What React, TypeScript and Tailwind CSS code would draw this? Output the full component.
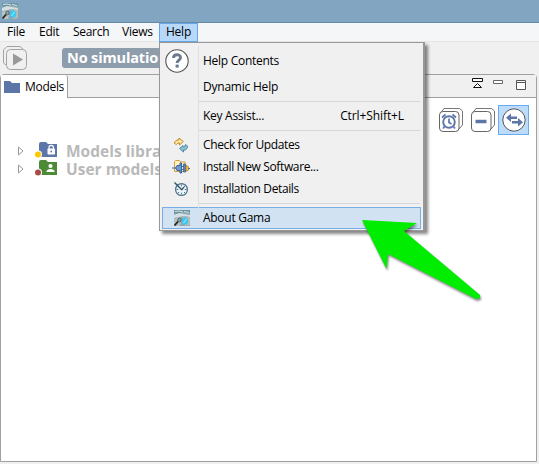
import type { ReactNode } from "react";

function GamaIcon() {
  return (
    <svg width="16" height="16" viewBox="0 0 16 16" className="shrink-0">
      <rect width="16" height="16" fill="#8fa6ae" />
      <path d="M0 0h16v3L9 2 4 4 0 3z" fill="#6d95a2" />
      <path d="M0 5l5-2 5 1 6 1v2L10 6 5 7 0 8z" fill="#d3dfe3" />
      <path d="M1 1.500l4-.5 4 1M10 1.500l5 1" stroke="#d5e3e6" fill="none" />
      <path d="M9 6l7 1v8l-5 1z" fill="#b5bcb4" />
      <path d="M0 9l4-2 4 2-2 7H0z" fill="#b4c1c5" />
      <ellipse cx="11" cy="11" rx="3" ry="3.800" fill="#38c8f4" />
      <path d="M9.500 13l3-4" stroke="#a5ecff" />
      <circle cx="5.500" cy="10" r="1.800" fill="#8fa3aa" stroke="#53656c" />
      <path d="M4 11.500l-3.500 4" stroke="#222" strokeWidth="1.800" />
    </svg>
  );
}

function HelpIcon() {
  return (
    <svg width="24" height="24" viewBox="0 0 24 24">
      <circle cx="12" cy="12" r="11.2" fill="#fff" stroke="#555" strokeWidth="1.1" />
      <path d="M8.500 9c0-4.300 7-4.200 7-.6 0 2.700-3.400 2.600-3.400 5.700" fill="none" stroke="#6b7b8d" strokeWidth="2.900" />
      <rect x="10.600" y="15.600" width="3.100" height="3" fill="#6b7b8d" />
    </svg>
  );
}

function UpdateIcon() {
  return (
    <svg width="16" height="16" viewBox="0 0 16 16">
      <path d="M3.500 7.500L1.500 6.500V5L4 3h2V1l4.300 3.500L6.500 8V6H5z" fill="#ffe7a0" stroke="#c28a2c" />
      <path d="M12.500 7.500l2 1.500v1.500L12.500 13h-2v2L6.500 11.500 10 8.500V10h1.500z" fill="#8fc1d4" stroke="#4b8aa6" />
    </svg>
  );
}

function InstallIcon() {
  return (
    <svg width="18" height="16" viewBox="0 0 18 16">
      <path d="M2.500 12.500v-10l1-1h4l1 1.500h4.500v9.500z" fill="#ffefbd" stroke="#cfa04a" />
      <path d="M5 6.500h3V4h1.500v10H8v-2.500H5L3.500 9z" fill="#6c99cf" stroke="#35629f" />
      <path d="M11.500 5v8h2V5z" fill="#5a86bd" stroke="#35629f" strokeWidth=".8" />
      <path d="M14 6.500h1l1.500 1.500v3L15 12h-1z" fill="#f5c553" stroke="#a87425" strokeWidth=".8" />
      <path d="M0 9h3.500M9.500 7.500h2M9.500 10.500h2M16.500 9.500H18" stroke="#38699f" strokeWidth="1.200" />
    </svg>
  );
}

function DetailsIcon() {
  return (
    <svg width="16" height="16" viewBox="0 0 16 16">
      <circle cx="8.500" cy="8.500" r="5.900" fill="#edf4f7" stroke="#4f758a" strokeWidth="1.300" />
      <path d="M8.500 3.500v1.800M13.500 8.500h-1.800M8.500 13.500v-1.800M3.500 8.500h1.800M12 5l-1 1M12 12l-1-1M5 12l1-1" stroke="#547b90" />
      <path d="M1.500 1.500l7.500 7.500" stroke="#305468" strokeWidth="1.400" />
      <path d="M8.500 9L11 6" stroke="#305468" strokeWidth="1.200" />
    </svg>
  );
}

function Item({ icon, label, height, keys, track, active }: {
  icon?: ReactNode; label: string; height: string; keys?: string; track: string; active?: boolean;
}) {
  return (
    <div className={`flex shrink-0 items-center ${height} ${active ? "mx-[2px] border border-[#78aee5] bg-[#d1e2f2]" : "mx-[3px]"}`}>
      <div className="flex w-[35px] shrink-0 items-center justify-center">{icon}</div>
      <span className={`ml-[5px] ${track}`}>{label}</span>
      {keys && <span className="mr-[16px] ml-auto tracking-[-0.1px]">{keys}</span>}
    </div>
  );
}

function Separator() {
  return (
    <div className="flex h-[7px] shrink-0 items-center pr-[3px] pl-[39px]">
      <div className="h-px w-full bg-[#d7d7d7]" />
    </div>
  );
}

function HelpMenu() {
  return (
    <div className="absolute top-[42px] left-[159px] flex h-[189px] w-[266px] flex-col border border-r-2 border-[#979797] bg-[#f0f0f0] pt-1 shadow-[3px_3px_3px_#00000078]">
      <div className="absolute top-[3px] bottom-[2px] left-[38px] w-px bg-[#dfdfdf]" />
      <Item icon={<div className="-ml-[7px]"><HelpIcon /></div>} label="Help Contents" height="h-[28px]" track="tracking-[-0.28px]" />
      <Item label="Dynamic Help" height="h-[23px]" track="tracking-[-0.22px]" />
      <Separator />
      <Item label="Key Assist..." keys="Ctrl+Shift+L" height="h-[22px]" track="tracking-[-0.28px]" />
      <Separator />
      <Item icon={<UpdateIcon />} label="Check for Updates" height="h-[22px]" track="tracking-[-0.37px]" />
      <Item icon={<InstallIcon />} label="Install New Software..." height="h-[22px]" track="tracking-[-0.37px]" />
      <Item icon={<DetailsIcon />} label="Installation Details" height="h-[22px]" track="tracking-[-0.37px]" />
      <Separator />
      <Item icon={<div className="ml-[2px]"><GamaIcon /></div>} label="About Gama" height="h-[22px]" track="tracking-[-0.28px]" active />
    </div>
  );
}

function StackFrame({ children }: { children: ReactNode }) {
  return (
    <svg width="24" height="24" viewBox="0 0 24 24" fill="none">
      <path d="M1.500 5L5 .5h15.500L23.500 3v14L20 21" fill="#fff" stroke="#777" />
      <rect x=".5" y="3.500" width="19.500" height="20" rx="3.500" fill="#fff" stroke="#666" />
      {children}
    </svg>
  );
}

function FolderIcon({ kind }: { kind: "lock" | "user" }) {
  const lock = kind === "lock";
  return (
    <svg width="24" height="18" viewBox="0 0 24 18">
      <path d="M5 2q0-2 2-2h5l2 2h9v13H7q-2 0-2-2z" fill={lock ? "#5c76a8" : "#4d8a35"} />
      {lock ? (
        <>
          <rect x="13.500" y="6.500" width="7.500" height="6" rx=".8" fill="#fff" />
          <path d="M15 7V5.500a2.200 2.200 0 0 1 4.400 0V7" fill="none" stroke="#fff" strokeWidth="1.200" />
          <circle cx="17.200" cy="9.500" r=".9" fill="#5c76a8" />
        </>
      ) : (
        <>
          <circle cx="16.500" cy="6" r="2.100" fill="#fff" />
          <path d="M12.500 12v-1q1-2 4-2t4 2v1z" fill="#fff" />
        </>
      )}
      <circle cx="4" cy="12.500" r="4" fill="#fff" />
      <circle cx="4" cy="12.500" r="3" fill={lock ? "#ffc900" : "#a84b4a"} />
    </svg>
  );
}

function TreeRow({ kind, label }: { kind: "lock" | "user"; label: string }) {
  return (
    <div className="flex h-[18px] items-center">
      <svg width="6" height="10" viewBox="0 0 6 10"><path d="M.5 1v8L5 5z" fill="#fff" stroke="#9b9b9b" /></svg>
      <div className="ml-[10px]"><FolderIcon kind={kind} /></div>
      <span className="ml-[8px] text-[15.500px] leading-[18px] font-bold whitespace-nowrap text-[#b9b9b9]">{label}</span>
    </div>
  );
}

export default function App() {
  return (
    <div className="relative flex h-[464px] w-[539px] flex-col overflow-hidden bg-[#f0f0f0] font-['Open_Sans','Noto_Sans',sans-serif] text-[12px] leading-[16px] whitespace-nowrap text-black">
      <header className="flex h-[23px] shrink-0 items-center border-b border-[#638ba5] bg-[#82a6c1] pl-[2px]"><GamaIcon /></header>
      <nav className="flex h-[19px] shrink-0 items-center border-b border-[#e4e6e9] bg-[#f5f6f8] tracking-[-0.25px]">
        <span className="ml-[7px] w-[32px]">File</span>
        <span className="w-[34px]">Edit</span>
        <span className="w-[49px] tracking-[-0.3px]">Search</span>
        <span className="w-[37px]">Views</span>
        <span className="flex h-[19px] w-[39px] items-center justify-center border border-[#67a5e8] bg-[#b7d8f8]">Help</span>
      </nav>
      <div className="flex h-[32px] shrink-0 items-start pt-[4px] pl-[3px]">
        <svg width="24" height="24" viewBox="0 0 24 24" fill="none" stroke="#a3a3a3">
          <path d="M3 19l-2.500-2V4L4 .5h13L20 3" />
          <rect x="3.500" y="3.500" width="20" height="20" rx="4" fill="#f0f0f0" />
          <path d="M10 7.500l10 6-10 6z" fill="#999" stroke="none" />
        </svg>
        <div className="mt-[2px] ml-[35px] flex h-[20px] w-[140px] items-center rounded-[3px] bg-[#8e9dac] pl-[5px] text-[14.500px] font-bold tracking-[-0.15px] text-white">No simulation</div>
      </div>
      <main className="mr-[2px] flex h-[388px] shrink-0 flex-col rounded-t-[4px] border border-[#a0a0a0] bg-white">
        <div className="flex h-[23px] shrink-0 bg-[#f0f0f0]">
          <div className="flex w-[67px] shrink-0 items-center rounded-t-[3px] border-r border-[#a0a0a0] bg-white pl-[3px]">
            <svg width="16" height="14" viewBox="0 0 16 14"><path d="M0 1h6l2 2h8v10H0z" fill="#5c76a8" /></svg>
            <span className="ml-[5px] tracking-[-0.3px]">Models</span>
          </div>
          <div className="flex grow justify-end border-b border-[#a0a0a0] pr-[10px]">
            <svg width="54" height="22" viewBox="0 0 54 22" fill="none">
              <path d="M.5 3.500h10v3H.500zM1.500 12.500L5.500 8.500l4 4z" fill="#fff" stroke="#111" />
              <path d="M21.500 5.500h9v3h-9z" fill="#fff" stroke="#666" />
              <path d="M44.500 5.500h9v9h-9zM44 7.500h10" fill="#fff" stroke="#555" />
            </svg>
          </div>
        </div>
        <div className="flex h-[44px] shrink-0 items-start justify-end pt-[7px] pr-[7px]">
          <div className="mt-[3px] mr-[8px]">
            <StackFrame>
              <circle cx="10" cy="14" r="5.800" stroke="#5c76a8" strokeWidth="1.900" />
              <path d="M10 10.500v4l2.500 1.500M3 9.500l3.500-3M13.500 6.500l3.500 3M5.500 18.500L4 20.500M14.500 18.500l1.500 2" stroke="#5c76a8" strokeWidth="1.700" />
            </StackFrame>
          </div>
          <div className="mt-[3px] mr-[3px]">
            <StackFrame><path d="M4.500 13.500h11" stroke="#5c76a8" strokeWidth="3.500" /></StackFrame>
          </div>
          <div className="flex h-[30px] w-[31px] items-center justify-center border border-[#6aabee] bg-[#bcdcfc]">
            <svg width="24" height="24" viewBox="0 0 24 24">
              <circle cx="12" cy="12" r="11.200" fill="#fff" stroke="#555" />
              <path d="M4 9.800l5-4.300v3h6v2.600H9v3zM21 14.200l-5 4.300v-3h-6v-2.600h6v-3z" fill="#5c76a8" />
            </svg>
          </div>
        </div>
        <div className="flex flex-col pl-[17px]">
          <TreeRow kind="lock" label="Models library" />
          <TreeRow kind="user" label="User models" />
        </div>
      </main>
      <HelpMenu />
      <svg className="absolute top-[210px] left-[352px] drop-shadow-[1px_2px_1px_#00000078]" width="140" height="100" viewBox="0 0 140 100">
        <path d="M10 10L65 13L52 21L128 85L128 88L124 89L36 44L34.500 59z" fill="#00ec00" />
      </svg>
    </div>
  );
}
